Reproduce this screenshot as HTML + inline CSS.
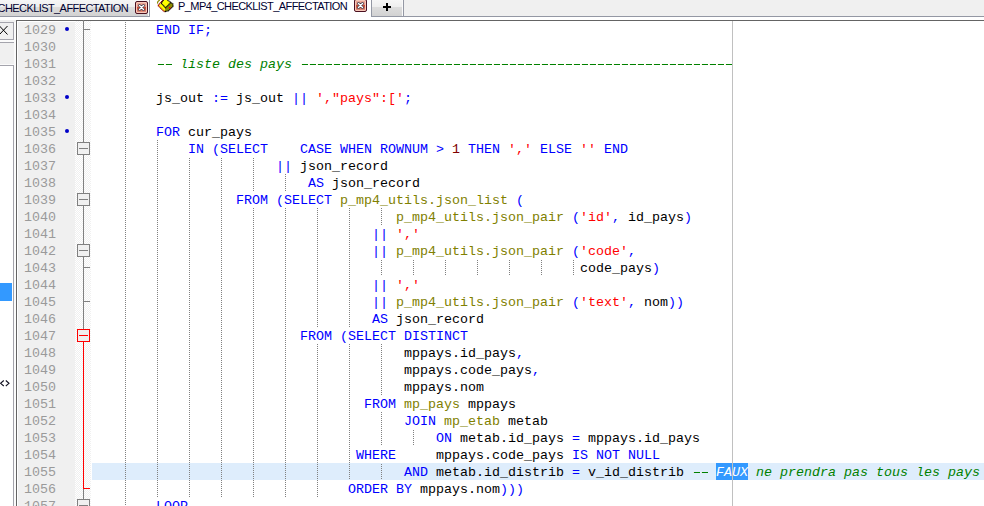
<!DOCTYPE html>
<html><head><meta charset="utf-8"><style>
*{margin:0;padding:0;box-sizing:border-box} svg{display:block}
html,body{width:984px;height:506px;overflow:hidden;background:#fff;position:relative}
body{font-family:"Liberation Mono",monospace;font-size:13.333px}
.abs{position:absolute}
#tabs{position:absolute;left:0;top:0;width:984px;height:17px;background:#f0f0f0;border-bottom:1px solid #9498a4}
.tab{position:absolute;top:0;height:17px;background:linear-gradient(#f6f6f6 0,#eeeeee 7px,#dddddd 7px,#d2d2d2 16px);border:1px solid #9498a4;box-shadow:inset -1px 0 0 #fafafa;border-top:none;font-family:"Liberation Sans",sans-serif;font-size:11px;color:#000028;white-space:nowrap;overflow:hidden}
.tt{position:absolute;font-family:"Liberation Sans",sans-serif;font-size:11px;letter-spacing:-0.58px;color:#000030;white-space:nowrap}
.act{position:absolute;top:0;left:150px;width:221px;height:20px;background:#fff}
.cb{position:absolute;width:13px;height:13px;border:1px solid #4a1020;border-radius:2px;background:linear-gradient(#eeb0a0,#e49484 42%,#c84a34 46%,#cc5840 62%,#e8a494);box-shadow:inset 0 0 0 1px #f6c8ba}
#topline{position:absolute;left:16px;top:20px;width:968px;height:1px;background:#646464}
#leftline{position:absolute;left:16px;top:20px;width:1px;height:486px;background:#646464}
#gut{position:absolute;left:17px;top:21px;width:58px;height:485px;background:#f0f0f0;border-top:1px solid #fff;border-left:1px solid #fff}
#foldm{position:absolute;left:75px;top:21px;width:16px;height:485px;background-color:#fff;background-image:linear-gradient(45deg,#f0f0f0 25%,transparent 25%,transparent 75%,#f0f0f0 75%),linear-gradient(45deg,#f0f0f0 25%,transparent 25%,transparent 75%,#f0f0f0 75%);background-size:2px 2px;background-position:0 0,1px 1px}
.n{position:absolute;left:24px;height:17px;line-height:17px;color:#9a9a9a;white-space:pre}
.mk{position:absolute;left:65px;width:4px;height:4px;background:#0000d0;border-radius:1.5px;box-shadow:0 0 0.6px #0000ff}
.l{position:absolute;height:17px;line-height:17px;white-space:pre;color:#000}
.k{color:#0000ff} .s{color:#ff0000} .f{color:#808000} .n2{color:#800000} .c{color:#008000;font-style:italic}
span.n{position:static;color:#800000}
.hy{background-image:linear-gradient(90deg,transparent 0,transparent 2px,#008000 2px,#008000 8px);background-size:8px 1px;background-repeat:repeat-x;background-position:0 7px}
.sel{color:#fff;font-style:italic}
#selbg{position:absolute;left:716px;top:463px;width:32px;height:17px;background:#3399ff}
.g{position:absolute;width:1px;height:17px;background-image:linear-gradient(to bottom,#808080 0,#808080 1px,transparent 1px,transparent 2px);background-size:1px 2px}
#hl{position:absolute;left:92px;top:463px;width:892px;height:17px;background:#deedfc}
#margin{position:absolute;left:732px;top:21px;width:1px;height:485px;background:#c0c0c0}
.fv{position:absolute;left:83px;width:1px;background:#808080}
.ft{position:absolute;left:84px;width:6px;height:1px;background:#808080}
.fb{position:absolute;left:77px;width:13px;height:13px;border:1px solid #808080;background:#f0f0f0}
.fb i{position:absolute;left:1px;top:5px;width:9px;height:1px;background:#808080}
.red{background:#ff0000}
.fb.red{border-color:#ff0000;background:#f0f0f0}
.fb.red i{background:#ff0000}
</style></head><body>
<div id="tabs"></div>
<div class="tab" style="left:-1px;width:151px"><span class="tt" style="right:21px;top:2px">P_MP4_CHECKLIST_AFFECTATION</span></div>
<div class="cb" style="left:135px;top:1px"><svg style="position:absolute;left:1px;top:1px" width="11" height="11"><path d="M2.5 2.5L6.5 6.5M6.5 2.5L2.5 6.5" stroke="#3c3c4c" stroke-width="2.8" stroke-linecap="round"/><path d="M2.5 2.5L6.5 6.5M6.5 2.5L2.5 6.5" stroke="#fff" stroke-width="1.4" stroke-linecap="round"/></svg></div>
<div class="act"><span class="tt" style="left:28px;top:0px">P_MP4_CHECKLIST_AFFECTATION</span></div>
<svg class="abs" style="left:156px;top:0" width="18" height="13" viewBox="156 0 18 13"><path d="M158 5.5 L161.2 3.3 L165.6 7.8 L164.5 11.8 Z" fill="#ffff00"/><path d="M161.2 3.3 L163.5 0 L167.5 0 L170.6 2.6 L165.6 7.8 Z" fill="#ffff00"/><path d="M165.6 7.8 L170.6 2.6 L173 4 L173 6.5 L168 11 L164.5 11.8 Z" fill="#8c8c00"/><path d="M158 5.5 L162.8 0.2 M158 5.5 L164.5 11.8" fill="none" stroke="#a00000" stroke-width="1.3" stroke-dasharray="1.1 0.5"/><path d="M161.2 3.3 L165.6 7.8 L170.8 2.4 M167.5 0 L170.8 2.4 L173 4 L173 6.5 L168.5 10.8 L164.5 11.8 M163.5 0 L161.2 3.3" fill="none" stroke="#000" stroke-width="1.2" stroke-dasharray="1.1 0.4"/><path d="M159.8 0 Q157 1.5 157.6 3.6" fill="none" stroke="#8a8a00" stroke-width="1.1"/><rect x="169" y="7" width="1.5" height="1.5" fill="#ff0000"/></svg>
<div class="cb" style="left:354px;top:-1px"><svg style="position:absolute;left:1px;top:1px" width="11" height="11"><path d="M2.5 2.5L6.5 6.5M6.5 2.5L2.5 6.5" stroke="#3c3c4c" stroke-width="2.8" stroke-linecap="round"/><path d="M2.5 2.5L6.5 6.5M6.5 2.5L2.5 6.5" stroke="#fff" stroke-width="1.4" stroke-linecap="round"/></svg></div>
<div class="tab" style="left:371px;width:33px"><svg style="position:absolute;left:11px;top:3px" width="9" height="9"><rect x="0" y="3" width="8" height="2" fill="#000"/><rect x="3" y="0" width="2" height="8" fill="#000"/></svg></div>
<div id="topline"></div>
<div id="leftpanel" class="abs" style="left:0;top:20px;width:16px;height:486px;background:#fbfbfb;border-top:2px solid #f0f0f0"></div>
<div class="abs" style="left:0;top:22px;width:14px;height:18px;border:1px solid #a4a4ac;border-left:none;background:#f0f0f0"></div>
<div class="abs" style="left:0;top:26px;width:9px;height:9px"><svg width="9" height="9"><path d="M-0.5 0L7.5 8.5M7.5 0L-0.5 8.5" stroke="#000" stroke-width="1"/></svg></div>
<div class="abs" style="left:0;top:42px;width:14px;height:22px;border-top:1px solid #a4a4ac;background:#f0f0f0"></div>
<div class="abs" style="left:0;top:65px;width:14px;height:441px;border-top:1px solid #a4a4ac;border-right:1px solid #a4a4ac;background:#fff"></div>
<div class="abs" style="left:0;top:283px;width:12px;height:18px;background:#3399ff"></div>
<svg class="abs" style="left:0;top:380px" width="11" height="8"><path d="M3.8 0.5 L0.6 3.3 L3.8 6 M5.8 0.5 L9 3.3 L5.8 6" fill="none" stroke="#101020" stroke-width="1.1"/></svg>
<div id="leftline"></div>
<div id="gut"></div>
<div id="foldm"></div>
<div id="hl"></div>
<div id="selbg"></div>
<div class="fv" style="top:20px;height:309px"></div><div class="fv red" style="top:329px;height:160px"></div><div class="ft red" style="top:488px"></div><div class="fv" style="top:489px;height:10px"></div><div class="ft" style="top:29px"></div><div class="ft" style="top:267px"></div><div class="ft" style="top:301px"></div><div class="fb" style="top:142px"><i></i></div><div class="fb" style="top:193px"><i></i></div><div class="fb" style="top:244px"><i></i></div><div class="fb" style="top:499px"><i></i></div><div class="fb red" style="top:329px"><i></i></div>
<div class="n" style="top:22px">1029</div><svg class="abs" style="left:64px;top:26px" width="6" height="6"><circle cx="3" cy="3" r="2" fill="#0000c8"/></svg><div class="n" style="top:39px">1030</div><div class="n" style="top:56px">1031</div><div class="n" style="top:73px">1032</div><div class="n" style="top:90px">1033</div><svg class="abs" style="left:64px;top:94px" width="6" height="6"><circle cx="3" cy="3" r="2" fill="#0000c8"/></svg><div class="n" style="top:107px">1034</div><div class="n" style="top:124px">1035</div><svg class="abs" style="left:64px;top:128px" width="6" height="6"><circle cx="3" cy="3" r="2" fill="#0000c8"/></svg><div class="n" style="top:141px">1036</div><div class="n" style="top:158px">1037</div><div class="n" style="top:175px">1038</div><div class="n" style="top:192px">1039</div><div class="n" style="top:209px">1040</div><div class="n" style="top:226px">1041</div><div class="n" style="top:243px">1042</div><div class="n" style="top:260px">1043</div><div class="n" style="top:277px">1044</div><div class="n" style="top:294px">1045</div><div class="n" style="top:311px">1046</div><div class="n" style="top:328px">1047</div><div class="n" style="top:345px">1048</div><div class="n" style="top:362px">1049</div><div class="n" style="top:379px">1050</div><div class="n" style="top:396px">1051</div><div class="n" style="top:413px">1052</div><div class="n" style="top:430px">1053</div><div class="n" style="top:447px">1054</div><div class="n" style="top:464px">1055</div><div class="n" style="top:481px">1056</div><div class="n" style="top:498px">1057</div>
<div class="g" style="left:125px;top:21px;background-position:0 1px"></div><div class="g" style="left:125px;top:38px;background-position:0 0px"></div><div class="g" style="left:125px;top:55px;background-position:0 1px"></div><div class="g" style="left:125px;top:72px;background-position:0 0px"></div><div class="g" style="left:125px;top:89px;background-position:0 1px"></div><div class="g" style="left:125px;top:106px;background-position:0 0px"></div><div class="g" style="left:125px;top:123px;background-position:0 1px"></div><div class="g" style="left:125px;top:140px;background-position:0 0px"></div><div class="g" style="left:157px;top:140px;background-position:0 0px"></div><div class="g" style="left:125px;top:157px;background-position:0 1px"></div><div class="g" style="left:157px;top:157px;background-position:0 1px"></div><div class="g" style="left:189px;top:157px;background-position:0 1px"></div><div class="g" style="left:221px;top:157px;background-position:0 1px"></div><div class="g" style="left:253px;top:157px;background-position:0 1px"></div><div class="g" style="left:125px;top:174px;background-position:0 0px"></div><div class="g" style="left:157px;top:174px;background-position:0 0px"></div><div class="g" style="left:189px;top:174px;background-position:0 0px"></div><div class="g" style="left:221px;top:174px;background-position:0 0px"></div><div class="g" style="left:253px;top:174px;background-position:0 0px"></div><div class="g" style="left:285px;top:174px;background-position:0 0px"></div><div class="g" style="left:125px;top:191px;background-position:0 1px"></div><div class="g" style="left:157px;top:191px;background-position:0 1px"></div><div class="g" style="left:189px;top:191px;background-position:0 1px"></div><div class="g" style="left:221px;top:191px;background-position:0 1px"></div><div class="g" style="left:125px;top:208px;background-position:0 0px"></div><div class="g" style="left:157px;top:208px;background-position:0 0px"></div><div class="g" style="left:189px;top:208px;background-position:0 0px"></div><div class="g" style="left:221px;top:208px;background-position:0 0px"></div><div class="g" style="left:253px;top:208px;background-position:0 0px"></div><div class="g" style="left:285px;top:208px;background-position:0 0px"></div><div class="g" style="left:317px;top:208px;background-position:0 0px"></div><div class="g" style="left:349px;top:208px;background-position:0 0px"></div><div class="g" style="left:381px;top:208px;background-position:0 0px"></div><div class="g" style="left:125px;top:225px;background-position:0 1px"></div><div class="g" style="left:157px;top:225px;background-position:0 1px"></div><div class="g" style="left:189px;top:225px;background-position:0 1px"></div><div class="g" style="left:221px;top:225px;background-position:0 1px"></div><div class="g" style="left:253px;top:225px;background-position:0 1px"></div><div class="g" style="left:285px;top:225px;background-position:0 1px"></div><div class="g" style="left:317px;top:225px;background-position:0 1px"></div><div class="g" style="left:349px;top:225px;background-position:0 1px"></div><div class="g" style="left:125px;top:242px;background-position:0 0px"></div><div class="g" style="left:157px;top:242px;background-position:0 0px"></div><div class="g" style="left:189px;top:242px;background-position:0 0px"></div><div class="g" style="left:221px;top:242px;background-position:0 0px"></div><div class="g" style="left:253px;top:242px;background-position:0 0px"></div><div class="g" style="left:285px;top:242px;background-position:0 0px"></div><div class="g" style="left:317px;top:242px;background-position:0 0px"></div><div class="g" style="left:349px;top:242px;background-position:0 0px"></div><div class="g" style="left:125px;top:259px;background-position:0 1px"></div><div class="g" style="left:157px;top:259px;background-position:0 1px"></div><div class="g" style="left:189px;top:259px;background-position:0 1px"></div><div class="g" style="left:221px;top:259px;background-position:0 1px"></div><div class="g" style="left:253px;top:259px;background-position:0 1px"></div><div class="g" style="left:285px;top:259px;background-position:0 1px"></div><div class="g" style="left:317px;top:259px;background-position:0 1px"></div><div class="g" style="left:349px;top:259px;background-position:0 1px"></div><div class="g" style="left:381px;top:259px;background-position:0 1px"></div><div class="g" style="left:413px;top:259px;background-position:0 1px"></div><div class="g" style="left:445px;top:259px;background-position:0 1px"></div><div class="g" style="left:477px;top:259px;background-position:0 1px"></div><div class="g" style="left:509px;top:259px;background-position:0 1px"></div><div class="g" style="left:541px;top:259px;background-position:0 1px"></div><div class="g" style="left:573px;top:259px;background-position:0 1px"></div><div class="g" style="left:125px;top:276px;background-position:0 0px"></div><div class="g" style="left:157px;top:276px;background-position:0 0px"></div><div class="g" style="left:189px;top:276px;background-position:0 0px"></div><div class="g" style="left:221px;top:276px;background-position:0 0px"></div><div class="g" style="left:253px;top:276px;background-position:0 0px"></div><div class="g" style="left:285px;top:276px;background-position:0 0px"></div><div class="g" style="left:317px;top:276px;background-position:0 0px"></div><div class="g" style="left:349px;top:276px;background-position:0 0px"></div><div class="g" style="left:125px;top:293px;background-position:0 1px"></div><div class="g" style="left:157px;top:293px;background-position:0 1px"></div><div class="g" style="left:189px;top:293px;background-position:0 1px"></div><div class="g" style="left:221px;top:293px;background-position:0 1px"></div><div class="g" style="left:253px;top:293px;background-position:0 1px"></div><div class="g" style="left:285px;top:293px;background-position:0 1px"></div><div class="g" style="left:317px;top:293px;background-position:0 1px"></div><div class="g" style="left:349px;top:293px;background-position:0 1px"></div><div class="g" style="left:125px;top:310px;background-position:0 0px"></div><div class="g" style="left:157px;top:310px;background-position:0 0px"></div><div class="g" style="left:189px;top:310px;background-position:0 0px"></div><div class="g" style="left:221px;top:310px;background-position:0 0px"></div><div class="g" style="left:253px;top:310px;background-position:0 0px"></div><div class="g" style="left:285px;top:310px;background-position:0 0px"></div><div class="g" style="left:317px;top:310px;background-position:0 0px"></div><div class="g" style="left:349px;top:310px;background-position:0 0px"></div><div class="g" style="left:125px;top:327px;background-position:0 1px"></div><div class="g" style="left:157px;top:327px;background-position:0 1px"></div><div class="g" style="left:189px;top:327px;background-position:0 1px"></div><div class="g" style="left:221px;top:327px;background-position:0 1px"></div><div class="g" style="left:253px;top:327px;background-position:0 1px"></div><div class="g" style="left:285px;top:327px;background-position:0 1px"></div><div class="g" style="left:125px;top:344px;background-position:0 0px"></div><div class="g" style="left:157px;top:344px;background-position:0 0px"></div><div class="g" style="left:189px;top:344px;background-position:0 0px"></div><div class="g" style="left:221px;top:344px;background-position:0 0px"></div><div class="g" style="left:253px;top:344px;background-position:0 0px"></div><div class="g" style="left:285px;top:344px;background-position:0 0px"></div><div class="g" style="left:317px;top:344px;background-position:0 0px"></div><div class="g" style="left:349px;top:344px;background-position:0 0px"></div><div class="g" style="left:381px;top:344px;background-position:0 0px"></div><div class="g" style="left:125px;top:361px;background-position:0 1px"></div><div class="g" style="left:157px;top:361px;background-position:0 1px"></div><div class="g" style="left:189px;top:361px;background-position:0 1px"></div><div class="g" style="left:221px;top:361px;background-position:0 1px"></div><div class="g" style="left:253px;top:361px;background-position:0 1px"></div><div class="g" style="left:285px;top:361px;background-position:0 1px"></div><div class="g" style="left:317px;top:361px;background-position:0 1px"></div><div class="g" style="left:349px;top:361px;background-position:0 1px"></div><div class="g" style="left:381px;top:361px;background-position:0 1px"></div><div class="g" style="left:125px;top:378px;background-position:0 0px"></div><div class="g" style="left:157px;top:378px;background-position:0 0px"></div><div class="g" style="left:189px;top:378px;background-position:0 0px"></div><div class="g" style="left:221px;top:378px;background-position:0 0px"></div><div class="g" style="left:253px;top:378px;background-position:0 0px"></div><div class="g" style="left:285px;top:378px;background-position:0 0px"></div><div class="g" style="left:317px;top:378px;background-position:0 0px"></div><div class="g" style="left:349px;top:378px;background-position:0 0px"></div><div class="g" style="left:381px;top:378px;background-position:0 0px"></div><div class="g" style="left:125px;top:395px;background-position:0 1px"></div><div class="g" style="left:157px;top:395px;background-position:0 1px"></div><div class="g" style="left:189px;top:395px;background-position:0 1px"></div><div class="g" style="left:221px;top:395px;background-position:0 1px"></div><div class="g" style="left:253px;top:395px;background-position:0 1px"></div><div class="g" style="left:285px;top:395px;background-position:0 1px"></div><div class="g" style="left:317px;top:395px;background-position:0 1px"></div><div class="g" style="left:349px;top:395px;background-position:0 1px"></div><div class="g" style="left:125px;top:412px;background-position:0 0px"></div><div class="g" style="left:157px;top:412px;background-position:0 0px"></div><div class="g" style="left:189px;top:412px;background-position:0 0px"></div><div class="g" style="left:221px;top:412px;background-position:0 0px"></div><div class="g" style="left:253px;top:412px;background-position:0 0px"></div><div class="g" style="left:285px;top:412px;background-position:0 0px"></div><div class="g" style="left:317px;top:412px;background-position:0 0px"></div><div class="g" style="left:349px;top:412px;background-position:0 0px"></div><div class="g" style="left:381px;top:412px;background-position:0 0px"></div><div class="g" style="left:125px;top:429px;background-position:0 1px"></div><div class="g" style="left:157px;top:429px;background-position:0 1px"></div><div class="g" style="left:189px;top:429px;background-position:0 1px"></div><div class="g" style="left:221px;top:429px;background-position:0 1px"></div><div class="g" style="left:253px;top:429px;background-position:0 1px"></div><div class="g" style="left:285px;top:429px;background-position:0 1px"></div><div class="g" style="left:317px;top:429px;background-position:0 1px"></div><div class="g" style="left:349px;top:429px;background-position:0 1px"></div><div class="g" style="left:381px;top:429px;background-position:0 1px"></div><div class="g" style="left:413px;top:429px;background-position:0 1px"></div><div class="g" style="left:125px;top:446px;background-position:0 0px"></div><div class="g" style="left:157px;top:446px;background-position:0 0px"></div><div class="g" style="left:189px;top:446px;background-position:0 0px"></div><div class="g" style="left:221px;top:446px;background-position:0 0px"></div><div class="g" style="left:253px;top:446px;background-position:0 0px"></div><div class="g" style="left:285px;top:446px;background-position:0 0px"></div><div class="g" style="left:317px;top:446px;background-position:0 0px"></div><div class="g" style="left:349px;top:446px;background-position:0 0px"></div><div class="g" style="left:125px;top:463px;background-position:0 1px"></div><div class="g" style="left:157px;top:463px;background-position:0 1px"></div><div class="g" style="left:189px;top:463px;background-position:0 1px"></div><div class="g" style="left:221px;top:463px;background-position:0 1px"></div><div class="g" style="left:253px;top:463px;background-position:0 1px"></div><div class="g" style="left:285px;top:463px;background-position:0 1px"></div><div class="g" style="left:317px;top:463px;background-position:0 1px"></div><div class="g" style="left:349px;top:463px;background-position:0 1px"></div><div class="g" style="left:381px;top:463px;background-position:0 1px"></div><div class="g" style="left:125px;top:480px;background-position:0 0px"></div><div class="g" style="left:157px;top:480px;background-position:0 0px"></div><div class="g" style="left:189px;top:480px;background-position:0 0px"></div><div class="g" style="left:221px;top:480px;background-position:0 0px"></div><div class="g" style="left:253px;top:480px;background-position:0 0px"></div><div class="g" style="left:285px;top:480px;background-position:0 0px"></div><div class="g" style="left:317px;top:480px;background-position:0 0px"></div><div class="g" style="left:125px;top:497px;background-position:0 1px"></div>
<div class="l" style="top:22px;left:156px"><span class="k">END</span> <span class="k">IF</span><span class="k">;</span></div><div class="l" style="top:39px;left:156px"></div><div class="l" style="top:56px;left:156px"><span class="c"><span class="hy">--</span> liste des pays <span class="hy">------------------------------------------------------</span></span></div><div class="l" style="top:73px;left:156px"></div><div class="l" style="top:90px;left:156px">js_out <span class="k">:=</span> js_out <span class="k">||</span> <span class="s">',"pays":['</span><span class="k">;</span></div><div class="l" style="top:107px;left:156px"></div><div class="l" style="top:124px;left:156px"><span class="k">FOR</span> cur_pays</div><div class="l" style="top:141px;left:188px"><span class="k">IN</span> <span class="k">(</span><span class="k">SELECT</span>    <span class="k">CASE</span> <span class="k">WHEN</span> <span class="k">ROWNUM</span> <span class="k">&gt;</span> <span class="n2">1</span> <span class="k">THEN</span> <span class="s">','</span> <span class="k">ELSE</span> <span class="s">''</span> <span class="k">END</span></div><div class="l" style="top:158px;left:276px"><span class="k">||</span> json_record</div><div class="l" style="top:175px;left:308px"><span class="k">AS</span> json_record</div><div class="l" style="top:192px;left:236px"><span class="k">FROM</span> <span class="k">(</span><span class="k">SELECT</span> <span class="f">p_mp4_utils.json_list</span> <span class="k">(</span></div><div class="l" style="top:209px;left:396px"><span class="f">p_mp4_utils.json_pair</span> <span class="k">(</span><span class="s">'id'</span><span class="k">,</span> id_pays<span class="k">)</span></div><div class="l" style="top:226px;left:372px"><span class="k">||</span> <span class="s">','</span></div><div class="l" style="top:243px;left:372px"><span class="k">||</span> <span class="f">p_mp4_utils.json_pair</span> <span class="k">(</span><span class="s">'code'</span><span class="k">,</span></div><div class="l" style="top:260px;left:580px">code_pays<span class="k">)</span></div><div class="l" style="top:277px;left:372px"><span class="k">||</span> <span class="s">','</span></div><div class="l" style="top:294px;left:372px"><span class="k">||</span> <span class="f">p_mp4_utils.json_pair</span> <span class="k">(</span><span class="s">'text'</span><span class="k">,</span> nom<span class="k">))</span></div><div class="l" style="top:311px;left:372px"><span class="k">AS</span> json_record</div><div class="l" style="top:328px;left:300px"><span class="k">FROM</span> <span class="k">(</span><span class="k">SELECT</span> <span class="k">DISTINCT</span></div><div class="l" style="top:345px;left:404px">mppays.id_pays<span class="k">,</span></div><div class="l" style="top:362px;left:404px">mppays.code_pays<span class="k">,</span></div><div class="l" style="top:379px;left:404px">mppays.nom</div><div class="l" style="top:396px;left:364px"><span class="k">FROM</span> <span class="f">mp_pays</span> mppays</div><div class="l" style="top:413px;left:404px"><span class="k">JOIN</span> <span class="f">mp_etab</span> metab</div><div class="l" style="top:430px;left:436px"><span class="k">ON</span> metab.id_pays <span class="k">=</span> mppays.id_pays</div><div class="l" style="top:447px;left:356px"><span class="k">WHERE</span>     mppays.code_pays <span class="k">IS</span> <span class="k">NOT</span> <span class="k">NULL</span></div><div class="l" style="top:464px;left:404px"><span class="k">AND</span> metab.id_distrib <span class="k">=</span> v_id_distrib <span class="c"><span class="hy">--</span> </span><span class="sel">FAUX</span><span class="c"> ne prendra pas tous les pays</span></div><div class="l" style="top:481px;left:348px"><span class="k">ORDER</span> <span class="k">BY</span> mppays.nom<span class="k">)))</span></div><div class="l" style="top:498px;left:156px"><span class="k">LOOP</span></div>
<div id="margin"></div>
</body></html>
